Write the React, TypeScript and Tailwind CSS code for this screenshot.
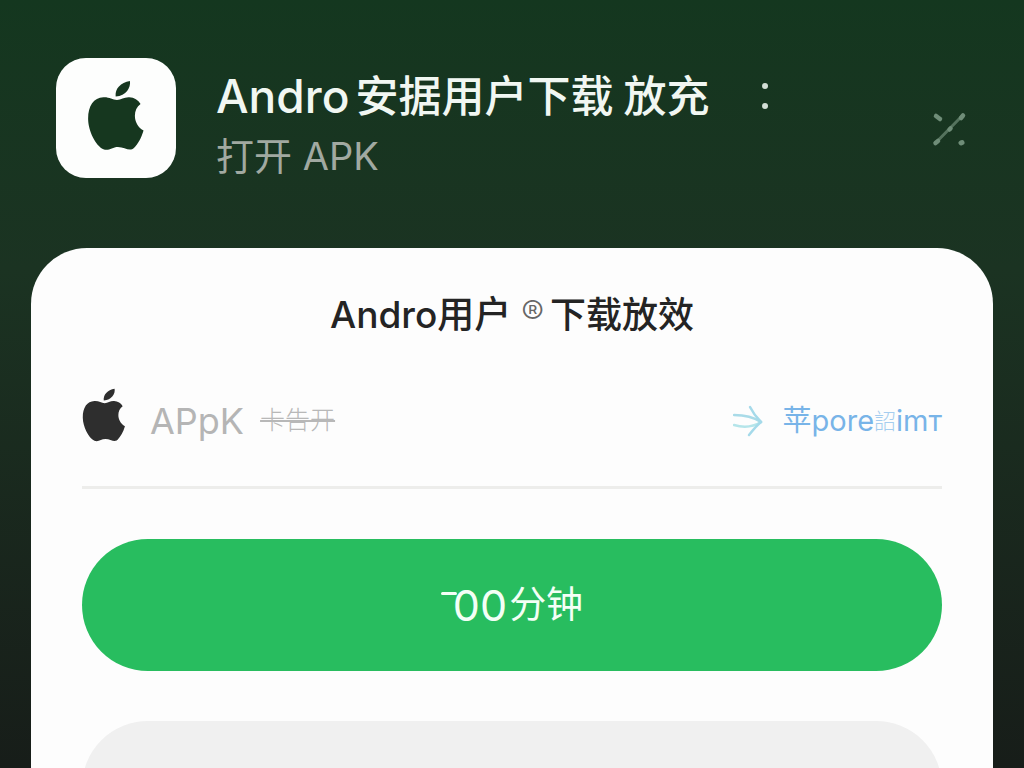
type AppleProps = { className?: string };

function AppleMark({ className }: AppleProps) {
  return (
    <svg viewBox="142 118 174 214" className={className} fill="currentColor" aria-hidden="true">
      <path d="M271 121C274 141 260 165 228 168C225 144 243 126 271 121Z" />
      <path d="M232 178C245 178 254 169 269 170C284 171 296 178 303 190C278 207 280 253 312 270C305 294 295 310 283 323C270 335 255 320 235 320C217 320 208 333 191 327C167 315 146 272 145 237C144 198 161 171 191 170C209 169 218 178 232 178Z" />
    </svg>
  );
}

function CloseMark() {
  return (
    <svg viewBox="0 0 36 36" className="size-9" fill="none" stroke="#6f8d78" strokeLinecap="round" aria-hidden="true">
      <path d="M4 4L8 7" strokeWidth="4.5" />
      <path d="M4 30.5L30 4" strokeWidth="3" strokeOpacity=".7" />
      <path d="M3.5 31L6 29M17.5 17.5L18.5 16.5M29 6L31 3.5" strokeWidth="4.5" />
      <path d="M29 31L30 30.5" strokeWidth="5" />
    </svg>
  );
}

function ArrowMark() {
  return (
    <svg viewBox="0 0 30 32" className="h-8 w-[30px]" fill="none" strokeWidth="2.5" strokeLinecap="round" strokeLinejoin="round" aria-hidden="true">
      <path d="M1 10C10 10 19 11 28 17" stroke="#a9dbe8" />
      <path d="M1 20C11 23 20 22 28 17" stroke="#b5e5ea" />
      <path d="M17 2C20 8 24 13 28 17C24 20 20 25 16 30" stroke="#a5daea" />
    </svg>
  );
}

export default function App() {
  return (
    <div className="flex h-screen flex-col overflow-hidden bg-linear-to-b from-[#14371f] via-[#1b3322] via-35% to-[#171d19] font-['Inter','Noto_Sans_CJK_SC',sans-serif]">
      <header className="flex shrink-0 items-center px-14 pt-[58px]">
        <div className="flex size-[120px] shrink-0 items-center justify-center rounded-[30px] bg-[#fdfefd] pb-1.5 text-[#16371f]">
          <AppleMark className="h-[71px] w-[58px]" />
        </div>
        <div className="ml-10 flex flex-col">
          <h1 className="flex items-center text-[43px] leading-[76px] font-medium whitespace-nowrap text-[#f1f7f2]">
            <span className="text-[46px]">Andro</span>
            <span className="ml-1.5">安据用户下载</span>
            <span className="ml-2.5">放充</span>
          </h1>
          <p className="text-[38px] leading-[44px] text-[#a1a9a1]">打开 APK</p>
        </div>
        <button type="button" aria-label="更多" className="ml-11 flex h-[76px] w-6 flex-col items-center justify-center gap-3.5 self-start">
          <span className="size-1.5 rounded-sm bg-[#d3ded5]" />
          <span className="size-1.5 rounded-sm bg-[#d3ded5]" />
        </button>
        <button type="button" aria-label="关闭" className="mt-6 ml-auto">
          <CloseMark />
        </button>
      </header>

      <main className="mx-[31px] mt-[70px] shrink-0 rounded-t-[56px] bg-[#fdfdfd] px-[51px] pt-[38px] pb-12">
        <h2 className="flex items-center justify-center text-[36px] leading-[54px] font-medium whitespace-nowrap text-[#242424]">
          <span className="text-[37px]">Andro用户</span>
          <span className="mr-1.5 ml-2.5 pb-1 text-[34px] font-light text-[#666666]">®</span>
          <span>下载放效</span>
        </h2>

        <div className="mt-11 flex items-center border-b-[3px] border-[#ededeb] pb-8">
          <AppleMark className="mb-3 h-[54px] w-11 shrink-0 text-[#2e2e2e]" />
          <span className="ml-6 text-[36px] leading-[60px] text-[#b5b5b5]">APpK</span>
          <del className="ml-4 text-[25px] font-light text-[#b8b8b8] decoration-2">卡告开</del>
          <a href="#store" className="ml-auto flex items-center text-[#78b4e8]">
            <ArrowMark />
            <span className="ml-5 flex items-center text-[29px] leading-10 whitespace-nowrap">
              苹pore
              <span className="text-[22px] font-light text-[#a5cdef]">詔</span>
              imт
            </span>
          </a>
        </div>

        <button type="button" className="mt-[50px] flex h-[132px] w-full items-center justify-center rounded-full bg-[#28bd5f] text-[37px] text-[#f3fff6]">
          <span className="-mr-1 mb-6 h-[3px] w-4 rounded-full bg-[#f3fff6]" />
          <span className="text-[43px]">00</span>
          <span className="ml-0.5">分钟</span>
        </button>
        <button type="button" aria-label="取消" className="mt-[50px] h-[132px] w-full rounded-full bg-[#f0f0f0]" />
      </main>
    </div>
  );
}
